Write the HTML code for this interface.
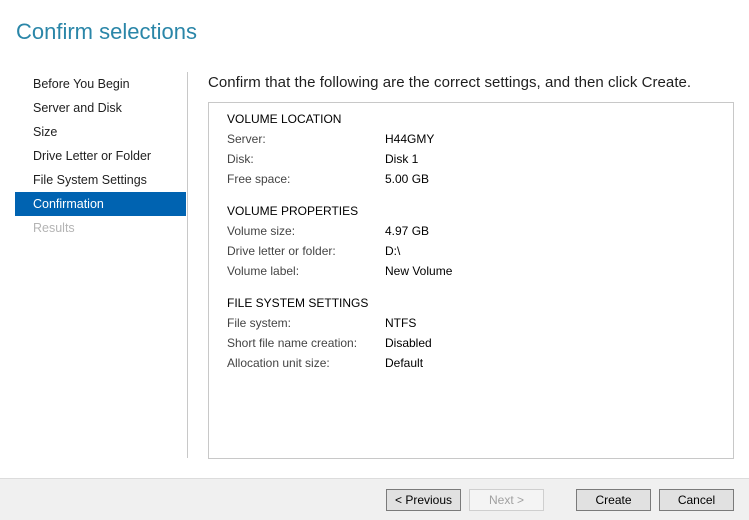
<!DOCTYPE html>
<html><head><style>
body{margin:0;width:749px;height:519px;background:#fff;font-family:"Liberation Sans",sans-serif;position:relative;overflow:hidden;color:#1e1e1e}
.a{position:absolute;white-space:nowrap}
.t{left:16px;top:19px;font-size:22px;color:#2a86a8;font-weight:normal}
.nav{left:33px;font-size:12.5px;color:#1e1e1e}
.sel{left:15px;top:192px;width:171px;height:24px;background:#0063b1}
.lbl{left:227px;font-size:12px;color:#444}
.val{left:385px;font-size:12px;color:#000}
.h{left:227px;font-size:12px;color:#000}
.btn{position:absolute;top:489px;height:20px;border:1px solid #7a7a7a;background:#e1e1e1;font-size:12px;text-align:center;line-height:20px;color:#000}
</style></head><body>
<div class="a t">Confirm selections</div>
<div class="a" style="left:187px;top:72px;width:1px;height:386px;background:#c8c8c8"></div>
<div class="a nav" style="top:77px">Before You Begin</div>
<div class="a nav" style="top:101px">Server and Disk</div>
<div class="a nav" style="top:125px">Size</div>
<div class="a nav" style="top:149px">Drive Letter or Folder</div>
<div class="a nav" style="top:173px">File System Settings</div>
<div class="a sel"></div>
<div class="a nav" style="top:197px;color:#fff">Confirmation</div>
<div class="a nav" style="top:221px;color:#b4b4b4">Results</div>
<div class="a" style="left:208px;top:74px;font-size:15px;letter-spacing:0.05px;color:#1e1e1e">Confirm that the following are the correct settings, and then click Create.</div>
<div class="a" style="left:208px;top:102px;width:524px;height:355px;border:1px solid #c8c8c8"></div>
<div class="a h" style="top:112px">VOLUME LOCATION</div>
<div class="a lbl" style="top:132px">Server:</div><div class="a val" style="top:132px">H44GMY</div>
<div class="a lbl" style="top:152px">Disk:</div><div class="a val" style="top:152px">Disk 1</div>
<div class="a lbl" style="top:172px">Free space:</div><div class="a val" style="top:172px">5.00 GB</div>
<div class="a h" style="top:204px">VOLUME PROPERTIES</div>
<div class="a lbl" style="top:224px">Volume size:</div><div class="a val" style="top:224px">4.97 GB</div>
<div class="a lbl" style="top:244px">Drive letter or folder:</div><div class="a val" style="top:244px">D:\</div>
<div class="a lbl" style="top:264px">Volume label:</div><div class="a val" style="top:264px">New Volume</div>
<div class="a h" style="top:296px">FILE SYSTEM SETTINGS</div>
<div class="a lbl" style="top:316px">File system:</div><div class="a val" style="top:316px">NTFS</div>
<div class="a lbl" style="top:336px">Short file name creation:</div><div class="a val" style="top:336px">Disabled</div>
<div class="a lbl" style="top:356px">Allocation unit size:</div><div class="a val" style="top:356px">Default</div>
<div class="a" style="left:0;top:478px;width:749px;height:41px;background:#f0f0f0;border-top:1px solid #dcdcdc"></div>
<div class="btn" style="left:386px;width:73px">&lt; Previous</div>
<div class="btn" style="left:469px;width:73px;border-color:#cfcfcf;background:#f4f4f4;color:#a0a0a0">Next &gt;</div>
<div class="btn" style="left:576px;width:73px">Create</div>
<div class="btn" style="left:659px;width:73px">Cancel</div>
</body></html>
